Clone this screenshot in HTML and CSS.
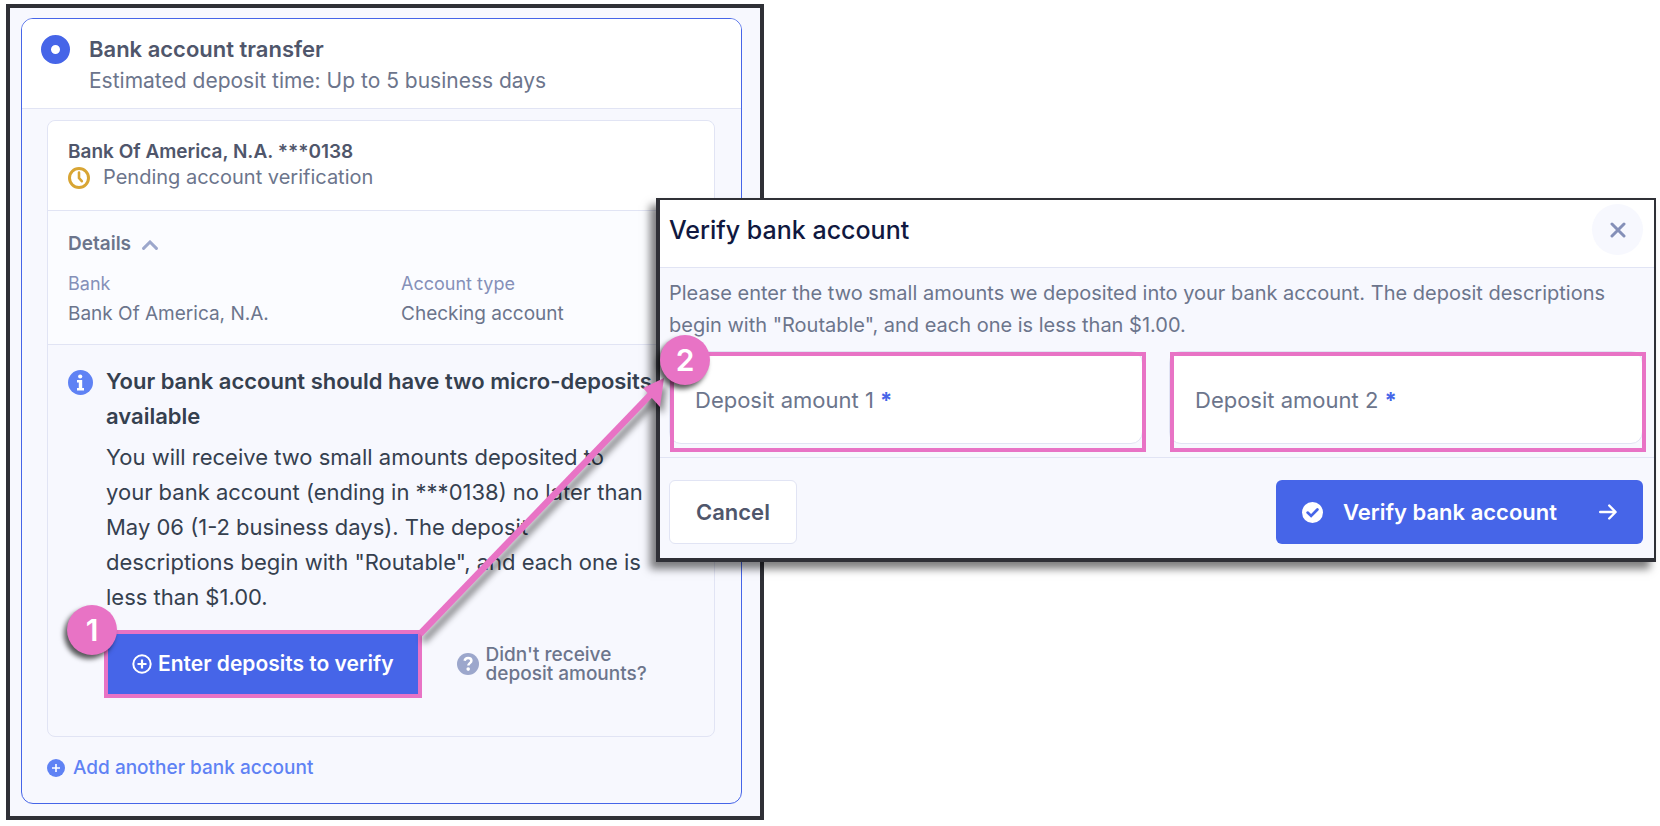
FILE: index.html
```html
<!DOCTYPE html>
<html lang="en">
<head>
<meta charset="utf-8">
<title>Verify bank account</title>
<link rel="stylesheet" href="styles.css">
</head>
<body>
<main class="stage">
  <section class="panel">
    <div class="method">
      <header class="method-head">
        <input class="radio" type="radio" id="transfer" name="method" checked>
        <div>
          <label class="method-title" for="transfer">Bank account transfer</label>
          <p class="method-sub">Estimated deposit time: Up to 5 business days</p>
        </div>
      </header>
      <div class="method-body">
        <article class="account">
          <div class="account-head">
            <h2 class="account-name">Bank Of America, N.A. ***0138</h2>
            <p class="status">
              <svg class="icon-22" viewBox="0 0 22 22" fill="none" stroke="#d8a534" stroke-width="3"><circle cx="11" cy="11" r="9.5"/><path d="M11 5.5V11l2.8 3.2" stroke-width="2.6" stroke-linecap="round"/></svg>
              Pending account verification
            </p>
          </div>
          <div class="details">
            <button class="details-toggle" type="button">Details
              <svg class="chevron" viewBox="0 0 16 10" fill="none" stroke="#9ca7cc" stroke-width="3" stroke-linecap="round"><path d="M1.6 8.4 8 2l6.4 6.4"/></svg>
            </button>
            <dl class="facts">
              <div><dt>Bank</dt><dd>Bank Of America, N.A.</dd></div>
              <div><dt>Account type</dt><dd>Checking account</dd></div>
            </dl>
          </div>
          <div class="notice">
            <svg class="icon-25" viewBox="0 0 25 25"><circle cx="12.500" cy="12.500" r="12.500" fill="#5f82f4"/><circle cx="12.200" cy="6.500" r="2.100" fill="#fff"/><path d="M9 10h5.200v8h1.800v2.600H9V18h1.800v-5.400H9z" fill="#fff"/></svg>
            <div class="notice-text">
              <h3>Your bank account should have two micro-deposits available</h3>
              <p>You will receive two small amounts deposited to your bank account (ending in ***0138) no later than May 06 (1-2 business days). The deposit descriptions begin with "Routable", and each one is less than $1.00.</p>
              <div class="notice-actions">
                <div class="callout">
                  <button class="enter" type="button">
                    <svg class="icon-20" viewBox="0 0 20 20" fill="none" stroke="#fff" stroke-width="2"><circle cx="10" cy="10" r="8.700"/><path d="M10 5.500v9M5.500 10h9" stroke-width="2.200"/></svg>
                    Enter deposits to verify
                  </button>
                  <span class="badge badge-one">1</span>
                </div>
                <a class="help" href="#help">
                  <svg class="icon-22" viewBox="0 0 22 22"><circle cx="11" cy="11" r="11" fill="#9ca7cc"/><path d="M7.600 7.800C8 5.800 9.300 4.900 11.100 4.900c1.900 0 3.300 1.100 3.300 2.800 0 2.300-3.100 2.500-3.100 4.900" fill="none" stroke="#fff" stroke-width="2.500"/><circle cx="11.200" cy="16.100" r="1.800" fill="#fff"/></svg>
                  <span>Didn't receive<br>deposit amounts?</span>
                </a>
              </div>
            </div>
          </div>
        </article>
        <a class="add" href="#add">
          <svg class="icon-18" viewBox="0 0 18 18"><circle cx="9" cy="9" r="9" fill="#5f82f4"/><path d="M9 5v8M5 9h8" stroke="#fff" stroke-width="1.600"/></svg>
          Add another bank account
        </a>
      </div>
    </div>
  </section>

  <section class="modal" role="dialog" aria-labelledby="modal-title">
    <header class="modal-head">
      <h1 id="modal-title">Verify bank account</h1>
      <button class="close" type="button" aria-label="Close">
        <svg class="icon-16" viewBox="0 0 16 16" stroke="#8590b8" stroke-width="3" stroke-linecap="round"><path d="M2 2l12 12M14 2 2 14"/></svg>
      </button>
    </header>
    <div class="modal-body">
      <p>Please enter the two small amounts we deposited into your bank account. The deposit descriptions begin with "Routable", and each one is less than $1.00.</p>
      <div class="fields">
        <div class="field">
          <input id="amount-1" type="text" required>
          <label for="amount-1">Deposit amount 1 <b>*</b></label>
          <span class="badge badge-two">2</span>
        </div>
        <div class="field">
          <input id="amount-2" type="text" required>
          <label for="amount-2">Deposit amount 2 <b>*</b></label>
        </div>
      </div>
    </div>
    <footer class="modal-foot">
      <button class="cancel" type="button">Cancel</button>
      <button class="verify" type="submit">
        <svg class="icon-21" viewBox="0 0 21 21"><circle cx="10.500" cy="10.500" r="10.500" fill="#fff"/><path d="M5.600 10.600l3.500 3.300 6.300-6.400" fill="none" stroke="#4665e8" stroke-width="2.700" stroke-linecap="round"/></svg>
        <span>Verify bank account</span>
        <svg class="icon-18" viewBox="0 0 18 18" fill="none" stroke="#fff" stroke-width="2.400" stroke-linecap="round" stroke-linejoin="round"><path d="M1.200 9h15M10.200 2.500 16.600 9l-6.400 6.500"/></svg>
      </button>
    </footer>
  </section>

  <svg class="arrow" viewBox="0 0 260 270"><path d="M6 260 239 18" stroke="#e873c5" stroke-width="6.500"/><path d="M250 4 229 14l17 19z" fill="#e873c5"/></svg>
</main>
</body>
</html>
```
FILE: styles.css
```css
* { box-sizing: border-box; }
body {
  margin: 0;
  background: #fff;
  color: #6c758c;
  font: 400 20px/32px Inter, "Liberation Sans", sans-serif;
}
h1, h2, h3, p, dl, dd { margin: 0; }
button { font: inherit; color: inherit; border: 0; cursor: pointer; }
a { text-decoration: none; }
svg { flex: none; display: block; }
.icon-16 { width: 16px; height: 16px; }
.icon-18 { width: 18px; height: 18px; }
.icon-20 { width: 20px; height: 20px; }
.icon-21 { width: 21px; height: 21px; }
.icon-22 { width: 22px; height: 22px; }
.icon-25 { width: 25px; height: 25px; }

.stage { position: relative; padding: 4px 6px; }
.panel {
  width: 46%;
  min-width: 758px;
  padding: 10px 18px 12px 11px;
  border: 4px solid #2f3036;
  background: #f7f8fe;
}
.method {
  overflow: clip;
  border: 1px solid #4665e8;
  border-radius: 12px;
}
.method-head {
  display: flex;
  gap: 19px;
  padding: 14px 19px 11px;
  border-bottom: 1px solid #e1e4f4;
  background: #fff;
}
.radio {
  appearance: none;
  flex: none;
  width: 29px;
  height: 29px;
  margin: 2px 0;
  border: 10px solid #4665e8;
  border-radius: 50%;
  background: #fff;
}
.method-title { display: block; font-size: 22px; font-weight: 600; color: #4f566b; }
.method-sub { font-size: 21px; }
.method-body { padding: 11px 26px 19px 25px; }

.account {
  border: 1px solid #e1e4f4;
  border-radius: 8px;
}
.account-head {
  padding: 18px 20px 20px;
  border-radius: 8px 8px 0 0;
  background: #fff;
}
.account-name { font-size: 19px; line-height: 26px; font-weight: 600; color: #4f566b; }
.status { display: flex; align-items: center; gap: 13px; line-height: 25px; }
.details {
  padding: 17px 20px 15px;
  border: solid #e1e4f4;
  border-width: 1px 0;
  background: #fbfcff;
}
.details-toggle {
  display: flex;
  align-items: center;
  gap: 11px;
  padding: 0;
  background: none;
  font-size: 19px;
  font-weight: 600;
}
.chevron { width: 16px; height: 10px; margin-top: 2px; }
.facts { display: grid; grid-template-columns: 1fr 1fr; gap: 40px; margin-top: 9px; }
.facts dt { font-size: 18px; line-height: 30px; color: #8590b8; }
.facts dd { font-size: 19px; line-height: 30px; }

.notice { display: flex; gap: 13px; padding: 19px 20px 38px; }
.notice > svg { margin: 6px 0; }
.notice-text { flex: 1; color: #35404f; font-size: 22px; line-height: 35px; }
.notice-text h3 { padding-bottom: 6px; font-size: 22px; font-weight: 600; }
.notice-text p { max-width: 550px; }
.notice-actions { display: flex; align-items: center; gap: 35px; margin-top: 15px; }
.callout { position: relative; margin-left: -2px; }
.enter {
  display: flex;
  align-items: center;
  gap: 6px;
  padding: 14px 24px;
  border: 4px solid #e873c5;
  background: #4665e8;
  color: #fff;
  font-size: 21px;
  line-height: 32px;
  font-weight: 600;
}
.help {
  display: flex;
  align-items: center;
  gap: 7px;
  color: #6c758c;
  font-size: 19px;
  line-height: 19px;
  font-weight: 500;
}
.add {
  display: flex;
  align-items: center;
  gap: 8px;
  margin-top: 15px;
  color: #5f82f4;
  font-size: 19px;
  font-weight: 500;
}

.badge {
  position: absolute;
  display: grid;
  place-items: center;
  width: 50px;
  height: 50px;
  border-radius: 50%;
  background: #e873c5;
  color: #fff;
  font: 600 30px/50px Inter, sans-serif;
  box-shadow: -3px 4px 5px rgba(0, 0, 0, 0.65);
}
.badge-one { left: -37px; top: -25px; }
.badge-two { left: -9px; top: -16px; z-index: 2; }

.modal {
  position: absolute;
  top: 198px;
  left: 656px;
  right: 4px;
  border: solid #2f3036;
  border-width: 2px 2px 4px 4px;
  background: #f7f8fe;
  box-shadow: -6px 7px 8px rgba(0, 0, 0, 0.5);
}
.modal-head {
  display: flex;
  justify-content: space-between;
  align-items: center;
  padding: 4px 11px 12px 9px;
  border-bottom: 1px solid #e1e4f4;
  background: #fff;
}
.modal-head h1 { font-size: 25px; font-weight: 500; color: #101840; }
.close {
  display: grid;
  place-items: center;
  width: 51px;
  height: 51px;
  padding: 0;
  border-radius: 50%;
  background: #f7f8fe;
}
.modal-body { padding: 9px 11px 13px 9px; border-bottom: 1px solid #e1e4f4; }
.fields { display: grid; grid-template-columns: 1fr 1fr; gap: 26px; margin-top: 10px; }
.field { position: relative; display: grid; align-items: center; }
.field::after {
  content: "";
  position: absolute;
  inset: 1px -3px -8px 1px;
  border: 4px solid #e873c5;
  pointer-events: none;
}
.field input, .field label { grid-area: 1 / 1; }
.field input {
  width: 100%;
  height: 93px;
  padding: 0 26px;
  border: 1px solid #e1e4f4;
  border-radius: 12px;
  background: #fff;
  font: inherit;
}
.field label { padding: 4px 26px 0; font-size: 22px; pointer-events: none; z-index: 1; }
.field b { color: #4665e8; font-weight: 700; }
.modal-foot { display: flex; justify-content: space-between; padding: 22px 11px 14px 9px; }
.cancel, .verify {
  height: 64px;
  padding: 0 26px;
  border-radius: 6px;
  font-size: 22px;
  font-weight: 600;
}
.cancel { border: 1px solid #e1e4f4; background: #fff; color: #4f566b; }
.verify { display: flex; align-items: center; background: #4665e8; color: #fff; }
.verify span { margin: 0 42px 0 20px; }

.arrow {
  position: absolute;
  left: 414px;
  top: 374px;
  width: 260px;
  height: 270px;
  pointer-events: none;
  filter: drop-shadow(3px 7px 3px rgba(0, 0, 0, 0.45));
}
```
